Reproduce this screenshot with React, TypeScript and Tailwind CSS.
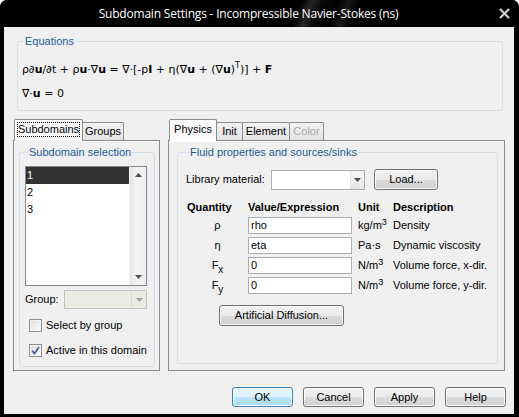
import React from "react";

const btnFace =
  "border border-[#707070] rounded-[3px] bg-[linear-gradient(#f2f2f2_0%,#ebebeb_50%,#dddddd_50%,#cfcfcf_100%)] shadow-[inset_0_0_0_1px_#fcfcfc]";
const btnFocus =
  "border border-[#3c7fb1] rounded-[3px] bg-[linear-gradient(#eaf6fd_0%,#d9f0fc_50%,#bee6fd_50%,#a7d9f5_100%)] shadow-[inset_0_0_0_1px_#f4fbfe]";

function Arrow({ up, color = "#4d4d4d" }: { up?: boolean; color?: string }) {
  return (
    <svg width="7" height="4" viewBox="0 0 7 4">
      <path d={up ? "M0 4 L3.5 0 L7 4 Z" : "M0 0 L7 0 L3.5 4 Z"} fill={color} />
    </svg>
  );
}

function Button({ label, className, focus }: { label: string; className: string; focus?: boolean }) {
  return (
    <button className={`${focus ? btnFocus : btnFace} ${className} flex items-center justify-center text-[11px] leading-none text-black`}>
      {label}
    </button>
  );
}

function Check({ checked }: { checked?: boolean }) {
  return (
    <span className="w-[13px] h-[13px] border border-[#8f8f8f] bg-[linear-gradient(135deg,#dcdcdc,#fefefe)] shadow-[inset_0_0_0_1px_#f4f4f4] flex items-center justify-center">
      {checked && (
        <svg width="9" height="9" viewBox="0 0 9 9">
          <path d="M1 4.5 L3.5 7.5 L8 1" stroke="#4a5f97" strokeWidth="1.8" fill="none" />
        </svg>
      )}
    </span>
  );
}

function Tab({ label, active, disabled, focus, w }: { label: string; active?: boolean; disabled?: boolean; focus?: boolean; w: string }) {
  if (active) {
    return (
      <div className={`${w} h-[22px] -mb-px relative z-10 border border-b-0 border-[#898c95] rounded-t-[2px] bg-[#fcfcfc] flex items-start justify-center pt-[3px]`}>
        <span className={focus ? "outline outline-1 outline-dotted outline-black leading-[13px]" : "leading-[13px]"}>{label}</span>
      </div>
    );
  }
  return (
    <div className={`${w} h-[18px] -ml-px first:ml-0 border border-b-0 border-[#898c95] rounded-t-[2px] bg-[linear-gradient(#f3f3f3,#e2e2e2)] flex items-center justify-center ${disabled ? "text-[#a8a8a8]" : ""}`}>
      {label}
    </div>
  );
}

function Legend({ children }: { children: React.ReactNode }) {
  return <legend className="px-[1px] ml-[3px] text-[#1d5b9a] leading-[12px]">{children}</legend>;
}

function TextBox({ value }: { value: string }) {
  return (
    <div className="w-[104px] h-[17px] border border-[#abadb3] bg-white flex items-center pl-[2px] leading-none">{value}</div>
  );
}

function Fy({ sub }: { sub: string }) {
  return (
    <span className="inline-block">
      F<span className="relative top-[4px] text-[10px]">{sub}</span>
    </span>
  );
}

export default function App() {
  return (
    <div className="w-[519px] h-[417px] bg-black rounded-t-[7px] flex flex-col font-['Liberation_Sans',Arial,sans-serif] text-[11px] text-black overflow-hidden">
      {/* title bar */}
      <div className="h-[27px] relative flex items-center justify-center bg-[linear-gradient(112deg,#000_0%,#000_57%,#262626_59%,#0a0a0a_61%,#000_64%,#1a1a1a_66%,#000_68%,#000_100%)]">
        <span className="font-['Open_Sans',sans-serif] text-[12px] text-white tracking-[-0.2px] -ml-[22px]">
          Subdomain Settings - Incompressible Navier-Stokes (ns)
        </span>
        <svg className="absolute right-[9px] top-[8px]" width="11" height="11" viewBox="0 0 11 11">
          <path d="M1 1 L10 10 M10 1 L1 10" stroke="#3a3a3a" strokeWidth="3.4" />
          <path d="M1 1 L10 10 M10 1 L1 10" stroke="#e6e6e6" strokeWidth="1.6" />
        </svg>
      </div>

      {/* client area */}
      <div className="flex-1 ml-[4px] mr-[5px] mb-[3px] bg-[#f0f0f0] flex flex-col">
        {/* equations */}
        <fieldset className="ml-[13px] mt-[8px] w-[486px] h-[76px] border border-[#d5dfe5] rounded-[3px] pl-[3px]">
          <Legend>Equations</Legend>
          <div className="font-['DejaVu_Sans',sans-serif] text-[11px] pl-[1px] pt-[16px] flex flex-col gap-[10px]">
            <div className="h-[14px] leading-[14px]">
              ρ∂<b>u</b>/∂t + ρ<b>u</b>·∇<b>u</b> = ∇·[-p<b>I</b> + η(∇<b>u</b> + (∇<b>u</b>)
              <span className="relative -top-[5px] text-[8px]">T</span>)] + <b>F</b>
            </div>
            <div className="h-[14px] leading-[14px]">
              ∇·<b>u</b> = 0
            </div>
          </div>
        </fieldset>

        {/* tab controls */}
        <div className="mt-[8px] h-[252px] flex gap-[8px] ml-[9px]">
          {/* left */}
          <div className="w-[147px] flex flex-col">
            <div className="h-[21px] flex items-end pl-[1px]">
              <Tab label="Subdomains" active focus w="w-[69px]" />
              <Tab label="Groups" w="w-[42px]" />
            </div>
            <div className="flex-1 border border-[#898c95] shadow-[inset_0_1px_0_#fff] pt-[5px] pl-[5px] pr-[4px] pb-[3px] flex flex-col">
              <fieldset className="flex-1 border border-[#d5dfe5] rounded-[3px] pl-[5px] pr-[7px]">
                <Legend>Subdomain selection</Legend>
                <div className="mt-[8px] h-[120px] border border-[#828790] bg-white flex">
                  <div className="flex-1 flex flex-col">
                    <div className="h-[17px] bg-[#333] text-white pl-[1px] flex items-center">1</div>
                    <div className="h-[17px] pl-[1px] flex items-center">2</div>
                    <div className="h-[17px] pl-[1px] flex items-center">3</div>
                  </div>
                  <div className="w-[17px] bg-[linear-gradient(90deg,#e4e4e4,#f4f4f4_40%,#f0f0f0)] border-l border-[#f4f4f4] flex flex-col items-center justify-between py-[6px]">
                    <Arrow up />
                    <Arrow />
                  </div>
                </div>
                <div className="mt-[4px] h-[19px] flex items-center">
                  <span className="w-[39px]">Group:</span>
                  <div className="w-[83px] h-[19px] border border-[#c2c2c2] bg-[#ebebe6] flex justify-end">
                    <div className="w-[15px] border-l border-[#d8d8d8] flex items-center justify-center">
                      <Arrow color="#a0a0a0" />
                    </div>
                  </div>
                </div>
                <div className="mt-[10px] ml-[4px] h-[13px] flex items-center gap-[4px]">
                  <Check />
                  <span>Select by group</span>
                </div>
                <div className="mt-[12px] ml-[4px] h-[13px] flex items-center gap-[4px]">
                  <Check checked />
                  <span>Active in this domain</span>
                </div>
              </fieldset>
            </div>
          </div>

          {/* right */}
          <div className="w-[337px] flex flex-col">
            <div className="h-[21px] flex items-end pl-[1px]">
              <Tab label="Physics" active w="w-[48px]" />
              <Tab label="Init" w="w-[27px]" />
              <Tab label="Element" w="w-[48px]" />
              <Tab label="Color" disabled w="w-[35px]" />
            </div>
            <div className="flex-1 border border-[#898c95] shadow-[inset_0_1px_0_#fff] pt-[5px] pl-[8px] pr-[6px] pb-[6px] flex flex-col">
              <fieldset className="flex-1 border border-[#d5dfe5] rounded-[3px] pl-[8px] pr-[6px]">
                <Legend>Fluid properties and sources/sinks</Legend>
                <div className="mt-[11px] h-[21px] flex items-center">
                  <span className="w-[85px]">Library material:</span>
                  <div className="w-[94px] h-[20px] border border-[#abadb3] bg-white flex justify-end">
                    <div className="w-[14px] border-l border-[#e3e3e3] bg-[linear-gradient(#f6f6f6,#e6e6e6)] flex items-center justify-center">
                      <Arrow />
                    </div>
                  </div>
                  <Button label="Load..." className="ml-[9px] w-[64px] h-[21px]" />
                </div>

                <div className="mt-[7px] pl-[1px] grid grid-cols-[61px_110px_35px_1fr] auto-rows-[17px] gap-y-[3px] items-center">
                  <b className="h-[14px] leading-[14px] self-end">Quantity</b>
                  <b className="h-[14px] leading-[14px] self-end">Value/Expression</b>
                  <b className="h-[14px] leading-[14px] self-end">Unit</b>
                  <b className="h-[14px] leading-[14px] self-end">Description</b>

                  <span className="text-center">ρ</span>
                  <TextBox value="rho" />
                  <span>
                    kg/m<span className="relative -top-[4px] text-[9px]">3</span>
                  </span>
                  <span>Density</span>

                  <span className="text-center">η</span>
                  <TextBox value="eta" />
                  <span>Pa·s</span>
                  <span>Dynamic viscosity</span>

                  <span className="text-center">
                    <Fy sub="x" />
                  </span>
                  <TextBox value="0" />
                  <span>
                    N/m<span className="relative -top-[4px] text-[9px]">3</span>
                  </span>
                  <span>Volume force, x-dir.</span>

                  <span className="text-center">
                    <Fy sub="y" />
                  </span>
                  <TextBox value="0" />
                  <span>
                    N/m<span className="relative -top-[4px] text-[9px]">3</span>
                  </span>
                  <span>Volume force, y-dir.</span>
                </div>

                <Button label="Artificial Diffusion..." className="mt-[11px] ml-[33px] w-[125px] h-[21px]" />
              </fieldset>
            </div>
          </div>
        </div>

        {/* dialog buttons */}
        <div className="mt-[16px] flex justify-end gap-[10px] pr-[8px]">
          <Button label="OK" focus className="w-[61px] h-[20px]" />
          <Button label="Cancel" className="w-[61px] h-[20px]" />
          <Button label="Apply" className="w-[61px] h-[20px]" />
          <Button label="Help" className="w-[61px] h-[20px]" />
        </div>
      </div>
    </div>
  );
}
